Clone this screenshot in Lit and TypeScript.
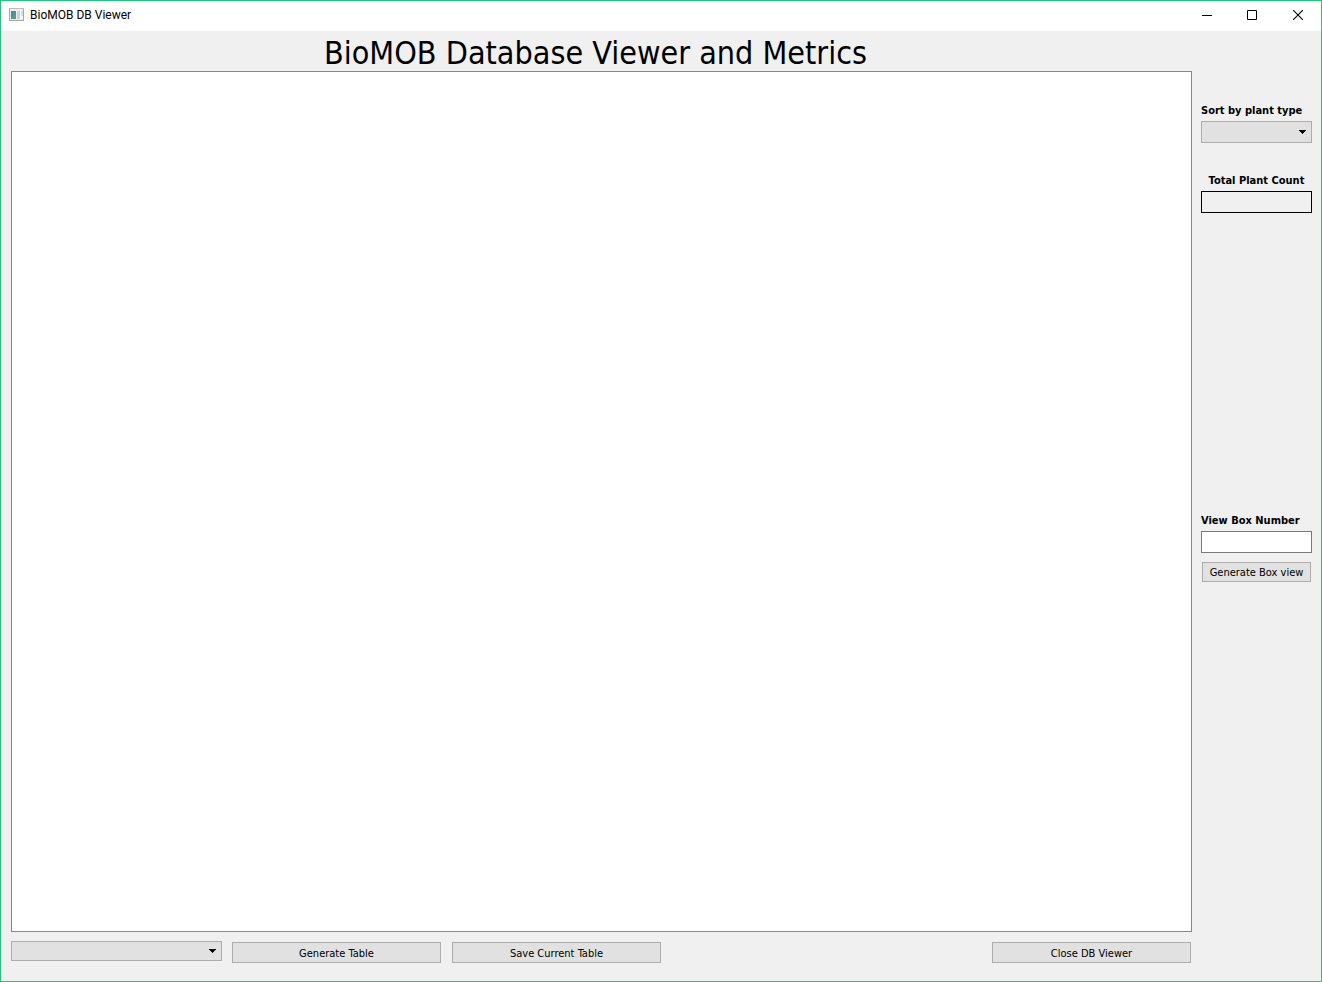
import { LitElement, html, css } from "lit";
import { customElement } from "lit/decorators.js";

@customElement("app-root")
export class AppRoot extends LitElement {
  static styles = css`
    :host {
      display: block;
      height: 100vh;
      font-family: "DejaVu Sans Condensed", "Noto Sans", sans-serif;
      font-size: 11px;
      line-height: 18px;
      color: #000;
    }
    * {
      box-sizing: border-box;
    }
    .window {
      display: flex;
      flex-direction: column;
      height: 100%;
      border: 1px solid #1ec77c;
      background: #f0f0f0;
    }
    .titlebar {
      display: flex;
      align-items: center;
      height: 30px;
      flex: none;
      padding: 0 0 2px 8px;
      background: #fff;
    }
    .app-icon {
      flex: none;
      margin-right: 5px;
    }
    .app-name {
      flex: 1;
      font-family: Roboto, sans-serif;
      font-size: 12px;
    }
    .caption {
      display: flex;
      align-items: center;
      justify-content: center;
      width: 46px;
      height: 28px;
      padding: 0;
      border: 0;
      background: transparent;
    }
    .body {
      flex: 1;
      min-height: 0;
      display: grid;
      grid-template-columns: minmax(0, 1fr) 111px;
      grid-template-rows: 40px minmax(0, 1fr) auto;
      column-gap: 9px;
      padding: 0 9px 18px 10px;
    }
    .heading {
      margin: 0;
      padding-right: 12px;
      font-size: 32px;
      line-height: 44px;
      font-weight: 400;
      text-align: center;
      white-space: nowrap;
    }
    .view {
      grid-column: 1;
      border: 1px solid #828790;
      background: #fff;
    }
    .side {
      grid-column: 2;
      grid-row: 2;
      display: flex;
      flex-direction: column;
      padding-top: 31px;
    }
    .group {
      display: flex;
      flex-direction: column;
      gap: 1px;
      margin-bottom: 29px;
    }
    .lower {
      margin-top: 270px;
    }
    .label {
      font-weight: 700;
      white-space: nowrap;
    }
    .centered {
      text-align: center;
    }
    .control {
      display: block;
      width: 100%;
      height: 22px;
      margin: 0;
      padding: 0 6px;
      border: 1px solid #adadad;
      border-radius: 0;
      font: inherit;
      color: #000;
      background: #e1e1e1;
    }
    .combo {
      position: relative;
      display: block;
    }
    .select {
      appearance: none;
    }
    .arrow {
      position: absolute;
      right: 6px;
      top: 50%;
      margin-top: -2px;
      pointer-events: none;
    }
    .count {
      display: block;
      height: 22px;
      border: 1px solid #000;
    }
    .input {
      border-color: #7a7a7a;
      background: #fff;
    }
    .button {
      height: 21px;
      padding: 2px 0 0;
      border: 1px solid #adadad;
      font: inherit;
      line-height: 16px;
      color: #000;
      background: #e1e1e1;
      white-space: nowrap;
    }
    .box-button {
      height: 20px;
      margin: 8px 1px 0;
    }
    .toolbar {
      grid-column: 1;
      display: flex;
      align-items: flex-start;
      padding: 9px 1px 0 0;
    }
    .toolbar .combo {
      width: 211px;
      margin-right: 10px;
    }
    .toolbar .control {
      height: 20px;
    }
    .toolbar .button {
      width: 209px;
      margin: 1px 11px 0 0;
    }
    .toolbar .close {
      width: 199px;
      margin: 1px 0 0 auto;
    }
  `;

  private combo(id: string, label: string) {
    return html`<span class="combo">
      <select class="control select" id=${id} aria-label=${label}></select>
      <svg class="arrow" width="7" height="4" viewBox="0 0 7 4" shape-rendering="crispEdges" aria-hidden="true">
        <path d="M0 0h7v1H0zM1 1h5v1H1zM2 2h3v1H2zM3 3h1v1H3z" />
      </svg>
    </span>`;
  }

  render() {
    return html`
      <div class="window">
        <header class="titlebar">
          <svg class="app-icon" width="16" height="14" viewBox="0 0 16 14" aria-hidden="true">
            <defs>
              <linearGradient id="pane" x1="0" y1="0" x2="1" y2="1">
                <stop offset="0" stop-color="#4d7fa8" />
                <stop offset="1" stop-color="#54a87d" />
              </linearGradient>
            </defs>
            <path fill="#a3a5a8" d="M0 0h15v13H0z" />
            <path fill="#eceef0" d="M1 1h13v11H1z" />
            <path fill="#b9bcc1" d="M0 0h15v1H0z" />
            <path fill="url(#pane)" d="M2 3h5v8H2z" />
            <path fill="#c3d5dc" d="M8 3h3v8H8z" />
            <path fill="#fafafa" d="M11 3h3v8h-3z" />
            <path fill="#d4e2da" d="M12 3h2v5h-2z" />
          </svg>
          <span class="app-name">BioMOB DB Viewer</span>
          <button class="caption" aria-label="Minimize">
            <svg width="12" height="10" viewBox="0 0 12 10"><path d="M2 5h10v1H2z" /></svg>
          </button>
          <button class="caption" aria-label="Maximize">
            <svg width="10" height="10" viewBox="0 0 10 10"><path fill="none" stroke="#000" d="M.5.5h9v9h-9z" /></svg>
          </button>
          <button class="caption" aria-label="Close">
            <svg width="10" height="10" viewBox="0 0 10 10"><path fill="none" stroke="#000" stroke-width="1.1" d="M0 0l10 10M10 0L0 10" /></svg>
          </button>
        </header>
        <main class="body">
          <h1 class="heading">BioMOB Database Viewer and Metrics</h1>
          <section class="view" aria-label="Database table"></section>
          <aside class="side">
            <div class="group">
              <label class="label" for="plant-type">Sort by plant type</label>
              ${this.combo("plant-type", "Sort by plant type")}
            </div>
            <div class="group">
              <label class="label centered" for="plant-count">Total Plant Count</label>
              <output class="count" id="plant-count"></output>
            </div>
            <div class="group lower">
              <label class="label" for="box-number">View Box Number</label>
              <input class="control input" id="box-number" type="text" />
              <button class="button box-button">Generate Box view</button>
            </div>
          </aside>
          <div class="toolbar">
            ${this.combo("table", "Table")}
            <button class="button">Generate Table</button>
            <button class="button">Save Current Table</button>
            <button class="button close">Close DB Viewer</button>
          </div>
        </main>
      </div>
    `;
  }
}
